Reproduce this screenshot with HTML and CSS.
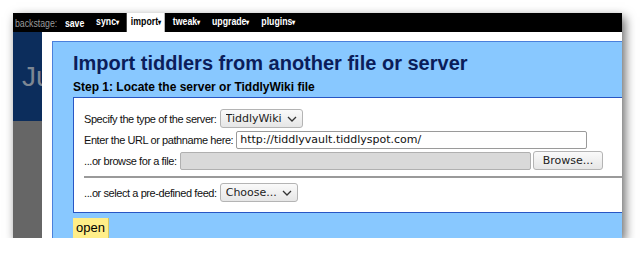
FILE: index.html
```html
<!DOCTYPE html>
<html lang="en">

<head>
    <meta charset="UTF-8">
    <title>Import tiddlers</title>
    <link rel="stylesheet" href="styles.css">
</head>

<body>
    <div class="window">
        <div class="backstage-bar">
            <div class="bar-items">
                <span class="backstage-label">backstage:</span>
                <span class="tab">save</span>
                <span class="tab">sync<span class="arrow">▾</span></span>
                <span class="tab active">import<span class="arrow">▾</span></span>
                <span class="tab">tweak<span class="arrow">▾</span></span>
                <span class="tab">upgrade<span class="arrow">▾</span></span>
                <span class="tab">plugins<span class="arrow">▾</span></span>
            </div>
        </div>

        <div class="main">
            <div class="side">
                <div class="side-header"><span class="site-title">Ju</span></div>
                <div class="side-body"></div>
            </div>

            <div class="stage">
                <div class="panel">
                    <h1 class="panel-title">Import tiddlers from another file or server</h1>
                    <h2 class="step-title">Step 1: Locate the server or TiddlyWiki file</h2>

                    <div class="wizard-box">
                        <div class="form-row">
                            <label>Specify the type of the server:</label>
                            <span class="select-wrap">
                                <select class="select">
                                    <option>TiddlyWiki</option>
                                </select>
                                <svg class="chevron" width="10" height="6" viewBox="0 0 10 6"><path d="M1 1l4 4 4-4" fill="none" stroke="#333" stroke-width="1.3"/></svg>
                            </span>
                        </div>
                        <div class="form-row">
                            <label>Enter the URL or pathname here:</label>
                            <input class="text-input url-input" type="text" value="http://tiddlyvault.tiddlyspot.com/">
                        </div>
                        <div class="form-row">
                            <label>...or browse for a file:</label>
                            <span class="file-field"></span>
                            <button class="browse-btn">Browse...</button>
                        </div>
                        <hr class="divider">
                        <div class="form-row">
                            <label>...or select a pre-defined feed:</label>
                            <span class="select-wrap">
                                <select class="select">
                                    <option>Choose...</option>
                                </select>
                                <svg class="chevron" width="10" height="6" viewBox="0 0 10 6"><path d="M1 1l4 4 4-4" fill="none" stroke="#333" stroke-width="1.3"/></svg>
                            </span>
                        </div>
                    </div>

                    <button class="open-btn">open</button>
                </div>
            </div>
        </div>
    </div>
</body>

</html>
```

FILE: styles.css
```css
body {
    margin: 0;
    background: #fff;
    font-family: "Liberation Sans", Arial, sans-serif;
}

.window {
    margin: 13px 0 0 13px;
    width: 609px;
    height: 225px;
    overflow: hidden;
    background: #fff;
    box-shadow: 3px 4px 10px rgba(0, 0, 0, 0.6);
}

/* narrow look of the backstage menu */
.backstage-bar {
    height: 19px;
    padding-left: 2px;
    background: #000;
}

.bar-items {
    display: flex;
    align-items: flex-end;
    height: 19px;
    font-size: 11.5px;
    white-space: nowrap;
    transform: scaleX(0.76);
    transform-origin: left center;
}

.backstage-label {
    color: #9a9a9a;
    line-height: 18px;
    margin-right: 5px;
}

.tab {
    color: #fff;
    font-weight: bold;
    padding: 0 5px;
    margin-right: 5.5px;
    line-height: 18px;
}

.tab.active {
    background: #fff;
    color: #000;
}

.arrow {
    font-size: 8px;
}

.main {
    display: flex;
    height: 206px;
}

.side {
    display: flex;
    flex-direction: column;
    width: 29px;
}

.side-header {
    height: 89px;
    background: #0c2d5c;
    overflow: hidden;
}

.site-title {
    display: block;
    margin: 29px 0 0 9px;
    font-size: 28px;
    line-height: 32px;
    color: #7d8793;
    white-space: nowrap;
}

.side-body {
    flex: 1;
    background: #666;
}

.stage {
    flex: 1;
    padding: 9px 0 0 10px;
    background: #fff;
}

.panel {
    height: 100%;
    padding-left: 20px;
    background: #88c8ff;
    border-top: 1px solid #4a80dc;
    border-left: 1px solid #4a80dc;
}

.panel-title {
    margin: 0;
    padding-top: 9px;
    font-size: 20px;
    line-height: 24px;
    color: #0b1d5a;
}

.step-title {
    margin: 4px 0 0;
    font-size: 12px;
    line-height: 16px;
    color: #000;
}

.wizard-box {
    margin-top: 2px;
    padding: 11px 0 10px 10px;
    background: #fff;
    border: 1px solid #2856c4;
    border-right: none;
}

.form-row {
    display: flex;
    align-items: center;
    height: 19px;
    margin-bottom: 2px;
    font-size: 11px;
    color: #111;
}

.form-row:last-child {
    margin-bottom: 0;
}

.form-row label {
    flex-shrink: 0;
    margin-right: 3px;
    letter-spacing: -0.42px;
    white-space: nowrap;
}

.select-wrap {
    position: relative;
    display: inline-block;
    flex-shrink: 0;
}

.select {
    display: block;
    appearance: none;
    height: 19px;
    padding: 0 19px 0 5px;
    font-family: "DejaVu Sans", sans-serif;
    font-size: 11px;
    color: #222;
    background: linear-gradient(#fafafa, #e6e6e6);
    border: 1px solid #b4b4b4;
    border-radius: 3px;
}

.chevron {
    position: absolute;
    right: 6px;
    top: 7px;
}

.text-input {
    box-sizing: border-box;
    flex-shrink: 0;
    height: 18px;
    padding: 0 3px;
    font-family: "DejaVu Sans", sans-serif;
    font-size: 11px;
    color: #111;
    border: 1px solid #9a9a9a;
    border-radius: 2px;
}

.url-input {
    width: 351px;
}

.file-field {
    box-sizing: border-box;
    flex-shrink: 0;
    width: 351px;
    height: 18px;
    background: #d9d9d9;
    border: 1px solid #b0b0b0;
    border-radius: 2px;
}

.browse-btn {
    flex-shrink: 0;
    height: 19px;
    margin-left: 2px;
    padding: 0 9px;
    font-family: "DejaVu Sans", sans-serif;
    font-size: 11px;
    color: #222;
    background: linear-gradient(#fafafa, #e6e6e6);
    border: 1px solid #b4b4b4;
    border-radius: 3px;
}

.divider {
    margin: 6px 0 5px;
    border: none;
    border-top: 2px solid #9a9a9a;
}

.open-btn {
    margin-top: 5px;
    padding: 2px 3px 3px;
    font-family: "Liberation Sans", sans-serif;
    font-size: 13px;
    color: #000;
    background: #ffee88;
    border: none;
    border-right: 1px solid #d8c860;
}
```
